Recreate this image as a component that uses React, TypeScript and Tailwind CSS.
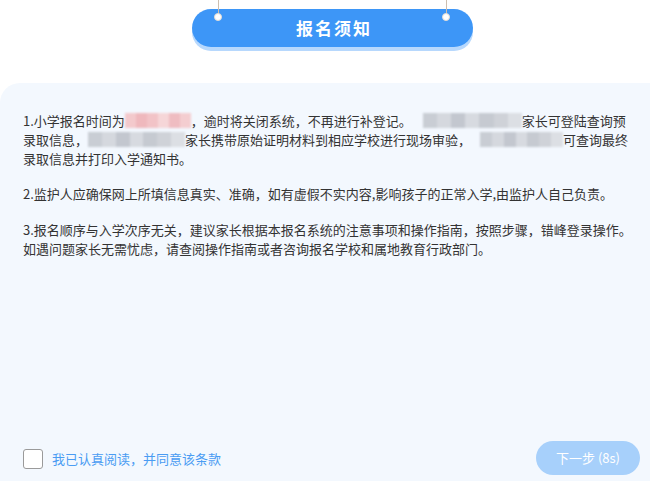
import React from 'react';

// blurred-out placeholder used where the original text was masked
function Masked({ width, tones }: { width: number; tones: string[] }) {
  return (
    <span
      className="inline-flex h-[15px] align-[-2px] overflow-hidden blur-[1.2px]"
      style={{ width }}
    >
      {tones.map((t, i) => (
        <span key={i} className="h-full flex-1" style={{ backgroundColor: t }} />
      ))}
    </span>
  );
}

const pink = ['#f3c9cc', '#efb8bd', '#f2c3c7', '#f6d6d8', '#efbcc1', '#f4cdd0'];
const gray = ['#c9cdd4', '#d5d8de', '#c3c7cf', '#d7dae0', '#c6cad1', '#cfd2d8', '#dcdfe4'];

export default function App() {
  return (
    <div
      className="flex h-[481px] w-[650px] flex-col overflow-hidden bg-white"
      style={{ fontFamily: '"Noto Sans CJK SC", "Noto Sans", sans-serif' }}
    >
      {/* hanging title plate */}
      <div className="flex h-[83px] justify-center">
        <div className="relative mt-[9px] ml-[14px] flex h-[38px] w-[281px] items-center justify-center rounded-full bg-[#3d96f7] shadow-[0_4px_0_#b7d8fd]">
          <span className="absolute left-[26px] -top-[9px] h-[17px] w-px bg-[#cdbfb0]" />
          <span className="absolute right-[26px] -top-[9px] h-[17px] w-px bg-[#cdbfb0]" />
          <span className="absolute left-[22.5px] top-[4px] h-[8px] w-[8px] rounded-full border border-[#e3dcd4] bg-white" />
          <span className="absolute right-[22.5px] top-[4px] h-[8px] w-[8px] rounded-full border border-[#e3dcd4] bg-white" />
          <span className="ml-[4px] text-[17px] font-bold tracking-[2px] text-white">报名须知</span>
        </div>
      </div>

      {/* notice panel */}
      <div className="flex flex-1 flex-col rounded-tl-[20px] bg-[#f3f8fe] pl-[23px] pr-[14px] pt-[28px] pb-[6px]">
        <div className="flex-1 text-[13px] leading-[19px] text-[#333]">
          <p className="mb-[16px]">
            1.小学报名时间为<Masked width={66} tones={pink} />，逾时将关闭系统，不再进行补登记。
            <span className="inline-block w-[11px]" />
            <Masked width={99} tones={gray} />家长可登陆查询预录取信息，
            <Masked width={97} tones={gray} />家长携带原始证明材料到相应学校进行现场审验，
            <span className="inline-block w-[9px]" />
            <Masked width={83} tones={gray} />可查询最终录取信息并打印入学通知书。
          </p>
          <p className="mb-[17px]">
            2.监护人应确保网上所填信息真实、准确，如有虚假不实内容,影响孩子的正常入学,由监护人自己负责。
          </p>
          <p>
            3.报名顺序与入学次序无关，建议家长根据本报名系统的注意事项和操作指南，按照步骤，错峰登录操作。如遇问题家长无需忧虑，请查阅操作指南或者咨询报名学校和属地教育行政部门。
          </p>
        </div>

        <div className="-mr-[4px] flex items-center justify-between">
          <label className="flex items-center gap-[9px] pt-[1px]">
            <span className="h-[20px] w-[20px] rounded-[3px] border border-[#9a9a9a] bg-white" />
            <span className="text-[13px] text-[#4a9cf3]">我已认真阅读，并同意该条款</span>
          </label>
          <button className="h-[34px] w-[104px] rounded-full bg-[#a7d0fb] text-[13px] text-white">
            下一步 (8s)
          </button>
        </div>
      </div>
    </div>
  );
}
